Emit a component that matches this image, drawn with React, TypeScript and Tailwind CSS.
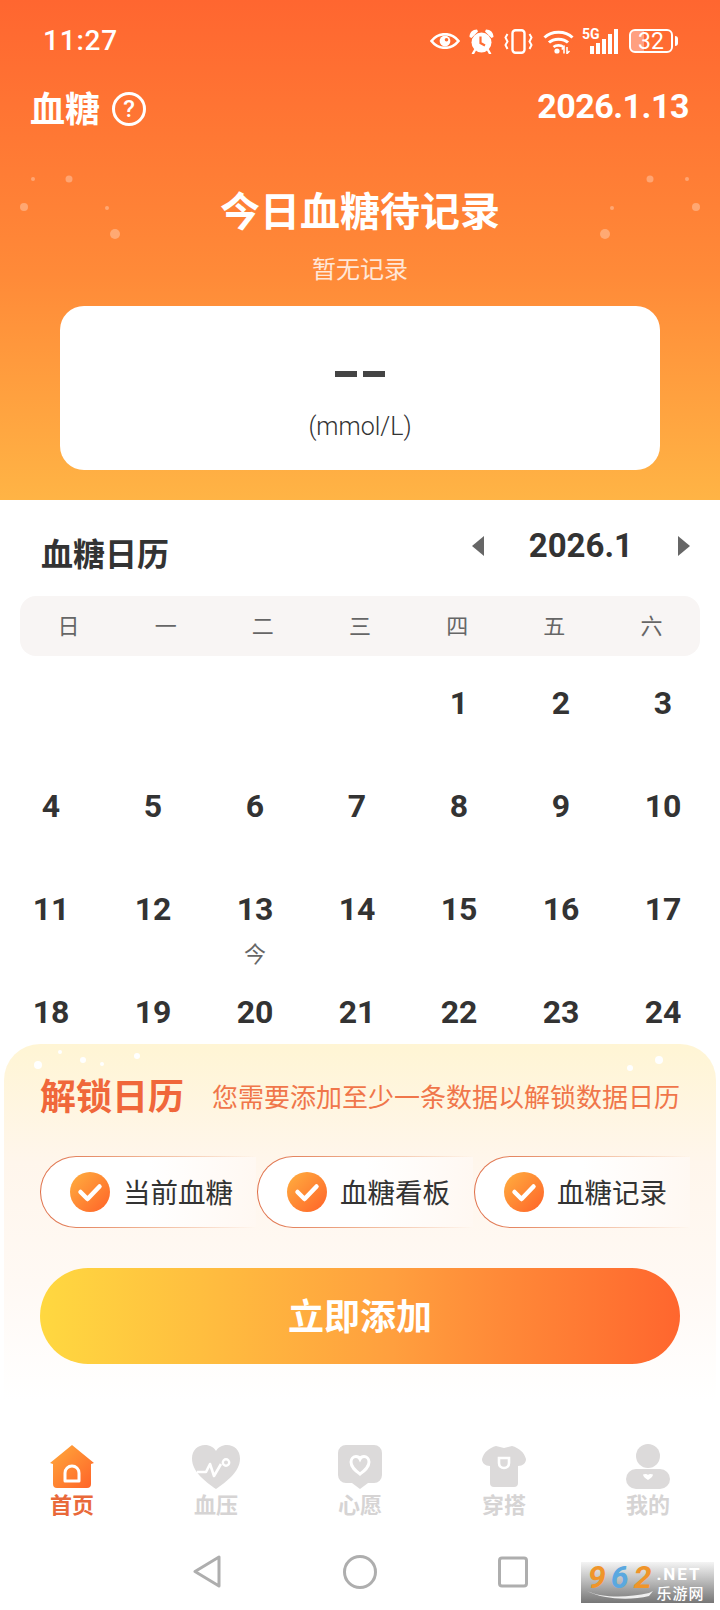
const weekDays = ['日', '一', '二', '三', '四', '五', '六']
const days: (number | null)[] = [null, null, null, null, 1, 2, 3, 4, 5, 6, 7, 8, 9, 10, 11, 12, 13, 14, 15, 16, 17, 18, 19, 20, 21, 22, 23, 24]
const chips = ['当前血糖', '血糖看板', '血糖记录']

function StatusIcons() {
  return (
    <div className="flex items-center text-white">
      <svg width="30" height="16" viewBox="0 0 30 16" fill="none" className="mr-[9px]">
        <path d="M1.5 8C5 3.5 10 1.2 15 1.2S25 3.5 28.5 8C25 12.5 20 14.8 15 14.8S5 12.5 1.5 8Z" stroke="#fff" strokeWidth="2.6" />
        <circle cx="15" cy="8" r="5.4" fill="#fff" />
        <circle cx="16.5" cy="6.8" r="1.8" fill="#ff6c32" />
      </svg>
      <svg width="25" height="25" viewBox="0 0 25 25" fill="none" className="mr-[10px]">
        <circle cx="12.5" cy="13.5" r="10" fill="#fff" />
        <path d="M11.5 7.5V14L16 16.5" stroke="#ff6c32" strokeWidth="2.2" />
        <path d="M0.5 8C0.5 3.5 3.5 0.5 8 0.5L9 2.5L2.5 9ZM24.5 8C24.5 3.5 21.5 0.5 17 0.5L16 2.5L22.5 9Z" fill="#fff" />
        <path d="M6 21L4 24.5M19 21L21 24.5" stroke="#fff" strokeWidth="2.4" strokeLinecap="round" />
      </svg>
      <svg width="29" height="25" viewBox="0 0 29 25" fill="none" className="mr-[10px]">
        <rect x="8.5" y="1.2" width="12" height="22.6" rx="3" stroke="#fff" strokeWidth="2.4" />
        <path d="M3.5 5L1.5 8.5L3.5 12.5L1.5 16L3.5 20M25.5 5L27.5 8.5L25.5 12.5L27.5 16L25.5 20" stroke="#fff" strokeWidth="2" />
      </svg>
      <svg width="31" height="25" viewBox="0 0 31 25" fill="none" className="mr-[8px]">
        <path d="M1.5 8.5C8.5 1.5 22.5 1.5 29.5 8.5" stroke="#fff" strokeWidth="3" />
        <path d="M6 13.5C10.5 9 20.5 9 25 13.5" stroke="#fff" strokeWidth="3" />
        <path d="M10.5 18C13 15.8 18 15.8 20.5 18" stroke="#fff" strokeWidth="2.6" />
        <circle cx="14" cy="22" r="2.6" fill="#fff" />
        <path d="M21 24.5V18L18.8 20.5M24 18V24.5L26.5 22" stroke="#fff" strokeWidth="1.6" />
      </svg>
      <div className="relative mr-[11px] h-[25px] w-[36px]">
        <span className="absolute left-0 top-[-2px] text-[14px] font-bold leading-[14px]">5G</span>
        <div className="absolute bottom-0 right-0 flex items-end gap-[2px]">
          <div className="h-[8px] w-[4px] bg-white" />
          <div className="h-[11px] w-[4px] bg-white" />
          <div className="h-[15px] w-[4px] bg-white" />
          <div className="h-[20px] w-[4px] bg-white" />
          <div className="h-[25px] w-[4px] bg-white" />
        </div>
      </div>
      <div className="flex items-center gap-[2px]">
        <div className="flex h-[24px] w-[44px] items-center justify-center rounded-[6px] border-2 border-white bg-[linear-gradient(90deg,#ff9f80_0%,#ff9f80_32%,transparent_32%)] text-[23px] leading-none">
          32
        </div>
        <div className="h-[10px] w-[3px] rounded-r-sm bg-white" />
      </div>
    </div>
  )
}

function Sparkles({ dots }: { dots: [number, number, number][] }) {
  return (
    <svg className="pointer-events-none absolute left-0 top-0" width="720" height="260" viewBox="0 0 720 260">
      {dots.map(([x, y, r]) => (
        <circle key={`${x}-${y}`} cx={x} cy={y} r={r} fill="#fff" opacity="0.3" />
      ))}
    </svg>
  )
}

function Header() {
  return (
    <div className="relative bg-[linear-gradient(180deg,#ff6630_0%,#ff8a38_55%,#ffb445_100%)] pb-[30px] text-white">
      <Sparkles
        dots={[
          [33, 179, 2],
          [69, 179, 3.5],
          [24, 207, 4],
          [107, 208, 2],
          [115, 234, 5],
          [650, 179, 3.5],
          [687, 179, 2],
          [612, 208, 2],
          [696, 207, 4],
          [605, 234, 5],
        ]}
      />
      <div className="flex h-[82px] items-center justify-between pl-[43px] pr-[42px]">
        <span className="text-[28px] font-medium leading-none tracking-[0.8px]">11:27</span>
        <StatusIcons />
      </div>
      <div className="flex h-[54px] items-center justify-between pl-[30px] pr-[31px]">
        <div className="flex items-center gap-[12px]">
          <span className="pt-[2px] text-[35px] font-bold leading-none">血糖</span>
          <div className="flex h-[34px] w-[34px] items-center justify-center rounded-full border-[3px] border-white text-[24px] font-medium leading-none">
            ?
          </div>
        </div>
        <span className="mb-[6px] text-[34px] font-bold leading-none tracking-[-0.5px]">2026.1.13</span>
      </div>
      <div className="relative mt-[49px] text-center text-[40px] font-bold leading-[56px]">今日血糖待记录</div>
      <div className="relative mt-[13px] text-center text-[24px] leading-[32px] text-white/80">暂无记录</div>
      <div className="relative mx-[60px] mt-[20px] flex h-[164px] flex-col items-center rounded-[24px] bg-white text-[#333]">
        <div className="mt-[65px] flex gap-[6px]">
          <div className="h-[6px] w-[22px] bg-[#444]" />
          <div className="h-[6px] w-[22px] bg-[#444]" />
        </div>
        <span className="mt-[34px] text-[25px] font-light leading-[32px] text-[#333]">(mmol/L)</span>
      </div>
    </div>
  )
}

function Calendar() {
  return (
    <div className="pt-[26px]">
      <div className="flex items-start justify-between pl-[41px] pr-[30px]">
        <span className="mt-[9px] text-[32px] font-bold leading-[40px] text-[#333]">血糖日历</span>
        <div className="flex h-[40px] items-center">
          <div className="h-0 w-0 border-y-[10px] border-r-[12px] border-y-transparent border-r-[#666]" />
          <span className="mx-[45px] text-[33px] font-bold leading-[40px] text-[#333]">2026.1</span>
          <div className="h-0 w-0 border-y-[10px] border-l-[12px] border-y-transparent border-l-[#666]" />
        </div>
      </div>
      <div className="mx-[20px] mt-[21px] grid h-[60px] grid-cols-7 items-center rounded-[16px] bg-[#f8f5f4] text-center text-[22px] text-[#666]">
        {weekDays.map((d) => (
          <span key={d}>{d}</span>
        ))}
      </div>
      <div className="mt-[27px] grid w-[714px] grid-cols-7 grid-rows-[103px_103px_103px_52px] text-center">
        {days.map((d, i) => (
          <div key={i} className="text-[32px] font-bold leading-[40px] text-[#333]">
            {d}
            {d === 13 && <div className="mt-[11px] text-[22px] font-normal leading-[30px] text-[#666]">今</div>}
          </div>
        ))}
      </div>
    </div>
  )
}

function CheckDot() {
  return (
    <svg width="40" height="40" viewBox="0 0 40 40" fill="none">
      <defs>
        <linearGradient id="chk" x1="0" y1="0" x2="1" y2="1">
          <stop offset="0" stopColor="#ffb040" />
          <stop offset="1" stopColor="#ff6228" />
        </linearGradient>
      </defs>
      <circle cx="20" cy="20" r="20" fill="url(#chk)" />
      <path d="M10.5 20L17.5 27L29.5 14.5" stroke="#fff" strokeWidth="4.5" strokeLinecap="round" strokeLinejoin="round" />
    </svg>
  )
}

function UnlockPanel() {
  return (
    <div className="relative mx-[4px] h-[396px] rounded-t-[36px] bg-[linear-gradient(180deg,#fff5d4_0%,#fff6ec_30%,#fff9f4_60%,#ffffff_90%)] px-[36px] pt-[32px]">
      <svg className="pointer-events-none absolute left-0 top-0" width="712" height="40" viewBox="0 0 712 40">
        {[
          [34, 21, 4],
          [56, 8, 2],
          [79, 16, 3],
          [98, 20, 2],
          [133, 12, 3],
          [626, 24, 3],
          [655, 16, 4],
        ].map(([x, y, r]) => (
          <circle key={x} cx={x} cy={y} r={r} fill="#fff" />
        ))}
      </svg>
      <div className="flex h-[44px] items-center whitespace-nowrap">
        <span className="shrink-0 text-[36px] font-bold leading-none text-[#f0673a]">解锁日历</span>
        <span className="ml-[28px] text-[26px] leading-none text-[#f0764a]">您需要添加至少一条数据以解锁数据日历</span>
      </div>
      <div className="mt-[36px] flex gap-[1px]">
        {chips.map((c) => (
          <div key={c} className="h-[72px] w-[216px] shrink-0 rounded-l-full bg-[linear-gradient(90deg,#de6c45_0%,#f0b595_50%,transparent_100%)] p-px pr-0">
            <div className="flex h-full items-center rounded-l-full bg-[linear-gradient(90deg,#ffffff_50%,#fff8f2_100%)] pl-[29px]">
              <CheckDot />
              <span className="ml-[13px] pt-[3px] text-[27.5px] leading-none text-[#333]">{c}</span>
            </div>
          </div>
        ))}
      </div>
      <div className="mt-[40px] flex h-[96px] items-center justify-center rounded-full bg-[linear-gradient(90deg,#ffd840_0%,#ff9f3e_55%,#ff662e_100%)] pt-[3px] text-[36px] font-bold text-white">
        立即添加
      </div>
    </div>
  )
}

function HomeIcon() {
  return (
    <svg width="44" height="44" viewBox="0 0 44 44" fill="none">
      <defs>
        <linearGradient id="home" x1="0" y1="0" x2="1" y2="1">
          <stop offset="0" stopColor="#ffab3c" />
          <stop offset="1" stopColor="#ff6228" />
        </linearGradient>
      </defs>
      <path d="M22 0L44 18L41 19V39A4 4 0 0 1 37 43H7A4 4 0 0 1 3 39V19L0 18Z" fill="url(#home)" />
      <path d="M15 36V28A7 7 0 0 1 29 28V36Z" stroke="#fff" strokeWidth="3" strokeLinejoin="round" fill="none" />
    </svg>
  )
}

function PulseIcon() {
  return (
    <svg width="48" height="44" viewBox="0 0 48 44" fill="none">
      <path d="M24 44C14 37 0 27 0 13.5C0 5 6 0 13 0C18 0 22 2.5 24 6C26 2.5 30 0 35 0C42 0 48 5 48 13.5C48 27 34 37 24 44Z" fill="#dcdada" />
      <path d="M5 27H14L18 19L22 31L29 19" stroke="#fff" strokeWidth="2.6" strokeLinejoin="round" />
      <circle cx="34" cy="17.5" r="3.2" stroke="#fff" strokeWidth="2.4" />
    </svg>
  )
}

function WishIcon() {
  return (
    <svg width="44" height="44" viewBox="0 0 44 44" fill="none">
      <path d="M8 0H36A8 8 0 0 1 44 8V30A8 8 0 0 1 36 38H30L22 44L14 38H8A8 8 0 0 1 0 30V8A8 8 0 0 1 8 0Z" fill="#dcdada" />
      <path d="M22 29C18 26 13 22.5 13 17C13 13.5 15.5 11.5 18 11.5C20 11.5 21.3 12.5 22 14C22.7 12.5 24 11.5 26 11.5C28.5 11.5 31 13.5 31 17C31 22.5 26 26 22 29Z" stroke="#fff" strokeWidth="3" />
    </svg>
  )
}

function ShirtIcon() {
  return (
    <svg width="44" height="42" viewBox="0 0 44 42" fill="none">
      <path d="M14 0L22 2L30 0C37 2 42 6 44 13C44 17 41 20 36 20V37A4 4 0 0 1 32 41H12A4 4 0 0 1 8 37V20C3 20 0 17 0 13C2 6 7 2 14 0Z" fill="#dcdada" />
      <path d="M17 12H27V17C27 20 25 22 22 22C19 22 17 20 17 17Z" stroke="#fff" strokeWidth="2.6" />
    </svg>
  )
}

function MeIcon() {
  return (
    <svg width="44" height="46" viewBox="0 0 44 46" fill="none">
      <circle cx="22" cy="12" r="12" fill="#dcdada" />
      <rect x="0" y="25" width="44" height="20" rx="10" fill="#dcdada" />
      <path d="M22 36C19.5 34.5 17 32.5 17 30.5C19 29.5 21 30 22 31C23 30 25 29.5 27 30.5C27 32.5 24.5 34.5 22 36Z" fill="#fff" />
    </svg>
  )
}

function TabBar() {
  const tabs = [
    { label: '首页', icon: <HomeIcon />, active: true },
    { label: '血压', icon: <PulseIcon />, active: false },
    { label: '心愿', icon: <WishIcon />, active: false },
    { label: '穿搭', icon: <ShirtIcon />, active: false },
    { label: '我的', icon: <MeIcon />, active: false },
  ]
  return (
    <div className="grid h-[90px] grid-cols-5 bg-white pt-[4px]">
      {tabs.map((t) => (
        <div key={t.label} className="flex flex-col items-center">
          <div className="flex h-[46px] items-center">{t.icon}</div>
          <span className={`mt-[4px] text-[22px] font-bold leading-[24px] ${t.active ? 'text-[#e9693a]' : 'text-[#d6d4d4]'}`}>{t.label}</span>
        </div>
      ))}
    </div>
  )
}

function NavBar() {
  return (
    <div className="flex h-[80px] justify-center gap-[121px] bg-white pr-[1px] pt-[25px]">
      <svg width="30" height="34" viewBox="0 0 30 34" fill="none">
        <path d="M3 16.5L27 2V31Z" stroke="#aeaeae" strokeWidth="3" strokeLinejoin="round" />
      </svg>
      <svg width="34" height="34" viewBox="0 0 34 34" fill="none">
        <circle cx="17" cy="17" r="15.5" stroke="#aeaeae" strokeWidth="3" />
      </svg>
      <svg width="30" height="34" viewBox="0 0 30 34" fill="none">
        <rect x="1.5" y="3" width="27" height="28" rx="2.5" stroke="#aeaeae" strokeWidth="3" />
      </svg>
    </div>
  )
}

function Watermark() {
  return (
    <div className="absolute bottom-[7px] right-[6px] h-[41px] w-[133px] bg-[linear-gradient(180deg,#f4f4f4_0%,#bdbdbd_45%,#767676_100%)] pl-[7px]">
      <div className="flex">
        <span className="text-[32px] font-bold italic leading-[31px] tracking-[5px] text-[#f0952a]">
          9<span className="text-[#5aa8e0]">6</span>2
        </span>
        <div className="flex flex-col leading-none text-white">
          <span className="mt-[4px] text-[17px] font-bold tracking-[2px]">.NET</span>
          <span className="mt-[4px] text-[15px] font-medium tracking-[1px]">乐游网</span>
        </div>
      </div>
      <svg className="absolute bottom-[3px] left-[6px]" width="66" height="10" viewBox="0 0 66 10" fill="none">
        <path d="M0 1C15 8 40 8 62 3L66 1L62 6C42 11 15 9 0 1Z" fill="#eee" />
      </svg>
    </div>
  )
}

export default function App() {
  return (
    <div className="relative h-[1610px] w-[720px] overflow-hidden bg-white font-['Roboto','Noto_Sans_CJK_SC',sans-serif]">
      <Header />
      <Calendar />
      <UnlockPanel />
      <TabBar />
      <NavBar />
      <Watermark />
    </div>
  )
}
